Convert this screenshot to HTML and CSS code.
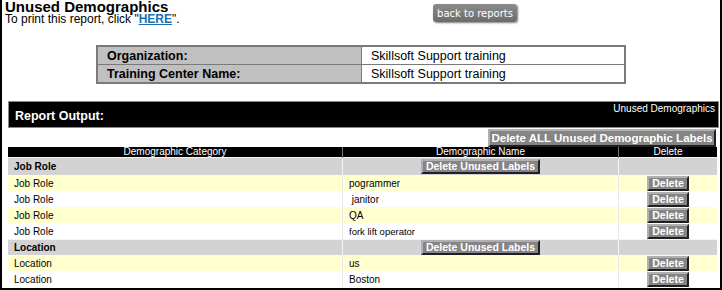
FILE: index.html
```html
<!DOCTYPE html>
<html lang="en">
<head>
    <meta charset="UTF-8">
    <title>Unused Demographics</title>
    <link rel="stylesheet" href="styles.css">
</head>
<body>
    <div class="frame">
        <!-- Title and back button -->
        <div class="top">
            <div class="title-block">
                <h1>Unused Demographics</h1>
                <p class="print-note">To print this report, click "<a href="#">HERE</a>".</p>
            </div>
            <button class="back-btn">back to reports</button>
        </div>

        <!-- Organization info -->
        <table class="info">
            <tr>
                <th>Organization:</th>
                <td>Skillsoft Support training</td>
            </tr>
            <tr>
                <th>Training Center Name:</th>
                <td>Skillsoft Support training</td>
            </tr>
        </table>

        <!-- Report header -->
        <div class="report-bar">
            <span class="report-title">Report Output:</span>
            <span class="report-name">Unused Demographics</span>
        </div>

        <div class="bulk-row">
            <button class="gray-btn delete-all">Delete ALL Unused Demographic Labels</button>
        </div>

        <!-- Demographics table -->
        <table class="demo-table">
            <tr class="head">
                <td class="col-cat">Demographic Category</td>
                <td class="col-name">Demographic Name</td>
                <td class="col-del">Delete</td>
            </tr>
            <tr class="group">
                <td>Job Role</td>
                <td class="center"><button class="gray-btn unused-btn">Delete Unused Labels</button></td>
                <td></td>
            </tr>
            <tr class="odd">
                <td>Job Role</td>
                <td>pogrammer</td>
                <td class="center"><button class="gray-btn del-btn">Delete</button></td>
            </tr>
            <tr>
                <td>Job Role</td>
                <td>&nbsp;janitor</td>
                <td class="center"><button class="gray-btn del-btn">Delete</button></td>
            </tr>
            <tr class="odd">
                <td>Job Role</td>
                <td>QA</td>
                <td class="center"><button class="gray-btn del-btn">Delete</button></td>
            </tr>
            <tr>
                <td>Job Role</td>
                <td class="small">fork lift operator</td>
                <td class="center"><button class="gray-btn del-btn">Delete</button></td>
            </tr>
            <tr class="group short">
                <td>Location</td>
                <td class="center"><button class="gray-btn unused-btn">Delete Unused Labels</button></td>
                <td></td>
            </tr>
            <tr class="odd">
                <td>Location</td>
                <td>us</td>
                <td class="center"><button class="gray-btn del-btn">Delete</button></td>
            </tr>
            <tr>
                <td>Location</td>
                <td>Boston</td>
                <td class="center"><button class="gray-btn del-btn">Delete</button></td>
            </tr>
        </table>
    </div>
</body>
</html>
```

FILE: styles.css
```css
body {
    margin: 0;
    font-family: "Liberation Sans", Arial, sans-serif;
    color: #000;
    background-color: #fff;
}

.frame {
    width: 722px;
    height: 290px;
    box-sizing: border-box;
    border: 2px solid #000;
    border-top: none;
    overflow: hidden;
}

/* Title area */
.top {
    display: flex;
    align-items: flex-start;
}

.title-block {
    width: 428px;
    padding-left: 3px;
}

h1 {
    margin: 0;
    font-size: 15px;
    line-height: 13px;
}

.print-note {
    margin: 0;
    font-size: 12px;
    line-height: 13px;
}

.print-note a {
    color: #1a6fb0;
    font-weight: bold;
}

.back-btn {
    margin-top: 4px;
    width: 84px;
    height: 18px;
    padding: 0;
    border: none;
    border-radius: 3px;
    background: linear-gradient(#8c8c8c, #6c6c6c);
    box-shadow: 1px 1px 2px rgba(0,0,0,0.5);
    color: #fff;
    font-family: "DejaVu Sans", Verdana, sans-serif;
    font-size: 10px;
}

/* Organization info */
.info {
    width: 530px;
    margin: 19px auto 0 auto;
    border-collapse: collapse;
    border: 2px solid #7a7a7a;
    font-size: 12.5px;
}

.info th,
.info td {
    height: 17px;
    padding: 0 0 0 9px;
    border: 1px solid #7a7a7a;
    text-align: left;
}

.info th {
    width: 254px;
    background-color: #c0c0c0;
}

/* Report header */
.report-bar {
    display: flex;
    justify-content: space-between;
    height: 25px;
    margin: 17px 1px 0 6px;
    border: 1px solid #888;
    background-color: #000;
    color: #fff;
}

.report-title {
    align-self: center;
    padding: 2px 0 0 6px;
    font-size: 12.5px;
    font-weight: bold;
}

.report-name {
    padding: 1px 3px 0 0;
    font-size: 10px;
}

.bulk-row {
    display: flex;
    justify-content: flex-end;
    margin: 1px 4px 0 6px;
}

.gray-btn {
    padding: 0;
    background-color: #858585;
    border: 2px solid;
    border-color: #b0b0b0 #202020 #202020 #b0b0b0;
    color: #fff;
    font-family: "Liberation Sans", Arial, sans-serif;
    font-weight: bold;
    font-size: 10.5px;
    line-height: 11px;
    white-space: nowrap;
}

.delete-all {
    width: 228px;
    height: 18px;
    font-size: 11.5px;
}

.unused-btn {
    width: 119px;
    height: 15px;
}

.del-btn {
    width: 42px;
    height: 15px;
}

/* Demographics table */
.demo-table {
    width: 709px;
    margin-left: 6px;
    border-collapse: collapse;
    font-size: 10px;
}

.demo-table td {
    height: 16px;
    padding: 0 0 0 6px;
    border-left: 1px solid #e8e8e8;
    vertical-align: middle;
}

.demo-table td:first-child {
    border-left: none;
}

.demo-table td.center {
    padding: 0;
    text-align: center;
    line-height: 0;
}

.demo-table .head td {
    height: 10px;
    padding: 0;
    background-color: #000;
    color: #fff;
    text-align: center;
    line-height: 10px;
    border-left-color: #777;
}

.col-cat {
    width: 334px;
}

.col-name {
    width: 275px;
}

.demo-table .group td {
    height: 17px;
    background-color: #d3d3d3;
    font-weight: bold;
    border-left-color: #f4f4f4;
    border-top: 1px solid #f4f4f4;
}

.demo-table .group.short td {
    height: 15px;
}

.demo-table .odd td {
    background-color: #ffffd0;
}

.demo-table td.small {
    font-size: 9.5px;
}
```
